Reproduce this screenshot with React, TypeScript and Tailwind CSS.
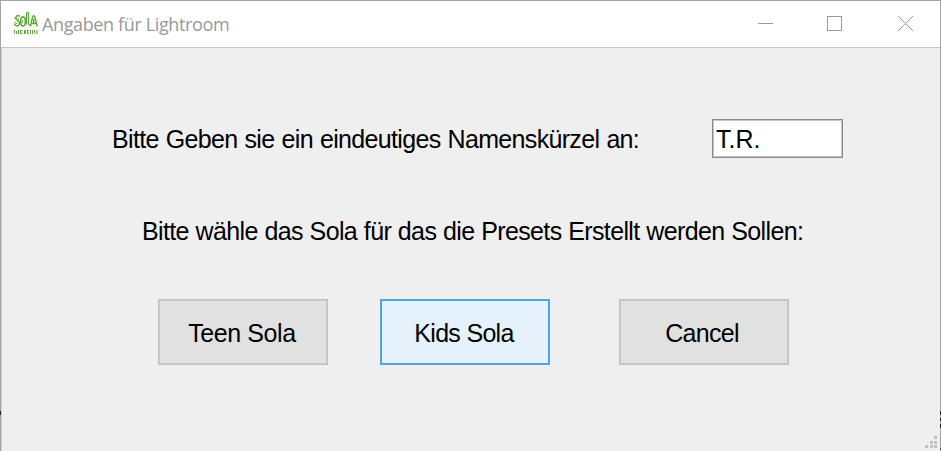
import React from "react";

const label = "whitespace-nowrap font-['Liberation_Sans',Arial,sans-serif] text-[25px] leading-[30px] text-black";
const grey = "border-[#c0c0c0] bg-[#e1e1e1] shadow-[inset_0_0_0_1px_#cbcbcb]";

function SolaLogo() {
  return (
    <svg className="mt-[11px] ml-[12px] h-[24px] w-[25px] shrink-0" viewBox="0 0 25 24" fill="none" stroke="#5da63a">
      <path d="M7 5.500C4.500 3.500 2.500 5 3 7.500C3.500 9.500 7 9.500 6.500 12.500C6 16 2.500 15.500 1.500 13" strokeWidth="1.500" />
      <path d="M1 6.500L3.500 8.500M1 11.500L4.500 12.500M5 8L6 7" strokeWidth="1" />
      <ellipse cx="10" cy="10.500" rx="2.300" ry="4.500" strokeWidth="1.500" />
      <path d="M8.500 5.500L11.500 6.500M9.500 9V12" strokeWidth="0.800" />
      <path d="M13.500 13.500V2.500Q14.500 -0.500 15.500 2.500V13Q16.500 15 18 14" strokeWidth="1.200" />
      <path d="M17.500 15.500L19.500 6.500Q20.800 3 22 6.500L24.300 15.500M19 12.500H23M20.700 8V12" strokeWidth="1.400" />
      <path d="M1.500 19V22.500M3.500 20V23M5.500 19V23M7.500 19V23M7.500 19.500H9.500M7.500 22.500H9.500M11.500 19V23M12.500 19.500V22.500M14.500 19V23M14.500 19.500H16M14.500 22.500H16M17.500 19V23M19.500 19V23M21.500 19V21M22 21V23M24 19V23" strokeWidth="1" />
    </svg>
  );
}

function Grip() {
  return (
    <div className="grid w-[12px] grid-cols-3 gap-x-[1.500px] gap-y-[1.500px]">
      {[0, 0, 1, 0, 1, 1, 1, 1, 1].map((on, i) => (
        <span key={i} className={on ? "size-[3px] bg-[#c0c0c0]" : "size-[3px]"} />
      ))}
    </div>
  );
}

export default function App() {
  return (
    <div className="relative flex h-[451px] w-[941px] flex-col border-x border-t border-[#a5a5a5] bg-[#efefef]">
      <header className="flex h-[47px] shrink-0 border-b border-[#c5c5c5] bg-white">
        <div className="-mt-px flex">
          <SolaLogo />
        </div>
        <h1 className="mt-[10px] ml-[4px] font-['Open_Sans','Noto_Sans',sans-serif] text-[18px] leading-[27px] font-normal tracking-[-0.370px] whitespace-nowrap text-[#999]">
          Angaben für Lightroom
        </h1>
        <svg className="-mt-px mr-[26px] ml-auto h-[46px] w-[156px]" viewBox="758 0 156 46" fill="none" stroke="#999" shapeRendering="crispEdges">
          <path d="M758 23.500H773" />
          <rect x="827.500" y="16.500" width="14" height="14" />
          <path d="M898 16L913 31M913 16L898 31" shapeRendering="auto" />
        </svg>
      </header>
      <main className="flex grow flex-col border-l border-[#d0d0d0]">
        <div className="mt-[71px] flex h-[39px] items-center">
          <p className={`${label} ml-[110px] w-[600px]`}>
            <span className="tracking-[-0.670px] [word-spacing:0.800px]">Bitte Geben sie ein eindeutiges Namenskürzel an:</span>
          </p>
          <input
            defaultValue="T.R."
            className="h-[39px] w-[131px] rounded-none border border-[#8b8b8b] bg-white pt-[2px] pl-[3px] font-['Liberation_Sans',Arial,sans-serif] text-[25px] text-black shadow-[inset_0_0_0_1px_#c4c4c4] outline-none"
          />
        </div>
        <p className={`${label} mt-[58px] ml-[140px] tracking-[-0.630px] [word-spacing:0.400px]`}>Bitte wähle das Sola für das die Presets Erstellt werden Sollen:</p>
        <div className="mt-[53px] ml-[156px] flex">
          <button className={`${label} ${grey} h-[66px] w-[170px] border pt-[2px] pr-[2px] tracking-[-0.400px]`}>Teen Sola</button>
          <button className={`${label} ml-[52px] h-[66px] w-[170px] border border-[#58a7e2] bg-[#e5f1fb] pt-[2px] pr-[2px] tracking-[-0.700px] shadow-[inset_0_0_0_1px_#4a9fe0]`}>Kids Sola</button>
          <button className={`${label} ${grey} ml-[69px] h-[66px] w-[170px] border pt-[2px] pr-[4px] tracking-[-0.700px]`}>Cancel</button>
        </div>
        <div className="mt-auto mr-[3px] mb-[3px] flex justify-end">
          <Grip />
        </div>
      </main>
      <i className="absolute top-[410px] -left-px h-[4px] w-px bg-[#222]" />
      <i className="absolute top-[410px] -right-px h-[4px] w-px bg-[#222]" />
      <i className="absolute top-[417px] -right-px h-[3px] w-px bg-[#222]" />
      <i className="absolute top-[423px] -right-px h-[4px] w-px bg-[#222]" />
      <i className="absolute top-[447px] -right-px h-[2px] w-px bg-[#555]" />
    </div>
  );
}
